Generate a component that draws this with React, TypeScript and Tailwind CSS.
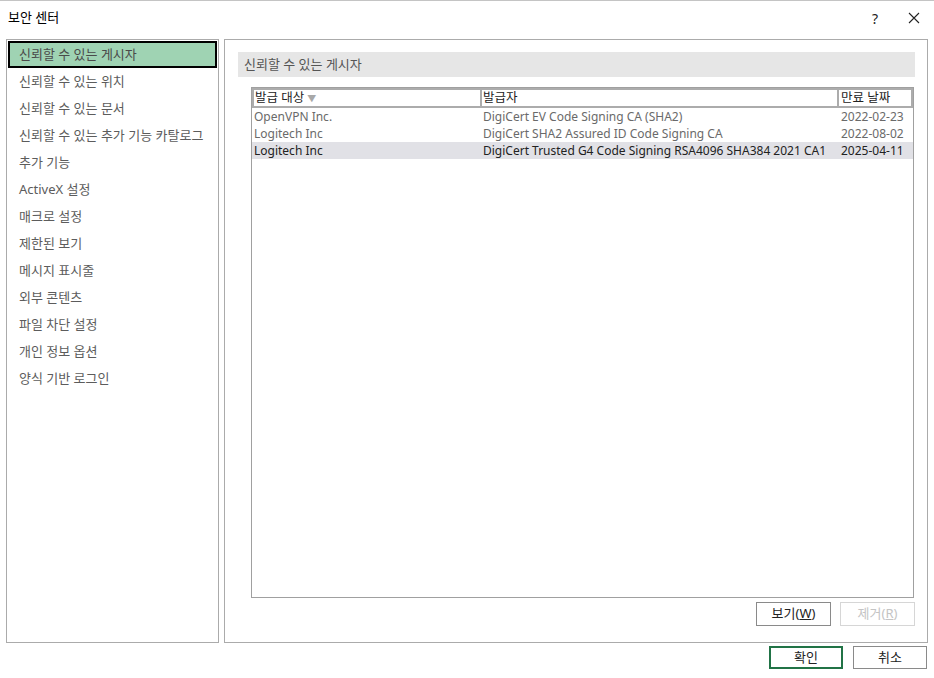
import React from 'react';

const menu = [
    '신뢰할 수 있는 게시자',
    '신뢰할 수 있는 위치',
    '신뢰할 수 있는 문서',
    '신뢰할 수 있는 추가 기능 카탈로그',
    '추가 기능',
    'ActiveX 설정',
    '매크로 설정',
    '제한된 보기',
    '메시지 표시줄',
    '외부 콘텐츠',
    '파일 차단 설정',
    '개인 정보 옵션',
    '양식 기반 로그인',
];

const rows = [
    { to: 'OpenVPN Inc.', by: 'DigiCert EV Code Signing CA (SHA2)', date: '2022-02-23' },
    { to: 'Logitech Inc', by: 'DigiCert SHA2 Assured ID Code Signing CA', date: '2022-08-02' },
    { to: 'Logitech Inc', by: 'DigiCert Trusted G4 Code Signing RSA4096 SHA384 2021 CA1', date: '2025-04-11', selected: true },
];

export default function App() {
    return (
        <div className="w-[934px] h-[678px] bg-white flex flex-col text-[13px] text-[#222] font-['Noto_Sans','Noto_Sans_CJK_KR',sans-serif] border-t border-[#c4c4c4] overflow-hidden">
            {/* title bar */}
            <div className="h-[38px] flex items-center pl-[8px] pr-[14px] pb-[4px] shrink-0">
                <span className="text-[13px] text-black">보안 센터</span>
                <div className="ml-auto flex items-center gap-[30px] text-[#222]">
                    <span className="text-[14px]">?</span>
                    <svg width="12" height="12" viewBox="0 0 12 12">
                        <path d="M1 1L11 11M11 1L1 11" stroke="#222" strokeWidth="1.1" />
                    </svg>
                </div>
            </div>

            <div className="flex gap-[5px] px-[6px] h-[604px] shrink-0">
                {/* left nav */}
                <div className="w-[213px] border border-[#ababab] p-[1px] flex flex-col">
                    {menu.map((m, i) => (
                        <div
                            key={m}
                            className={
                                i === 0
                                    ? 'h-[27px] flex items-center pl-[9px] bg-[#9fd3b3] border-2 border-black text-[#4a4a4a]'
                                    : 'h-[27px] flex items-center pl-[11px] text-[#5c5c5c]'
                            }
                        >
                            {m}
                        </div>
                    ))}
                </div>

                {/* right pane */}
                <div className="flex-1 border border-[#ababab] pt-[12px] pl-[13px] pr-[12px] flex flex-col">
                    <div className="h-[25px] bg-[#e6e6e6] flex items-center pl-[6px] text-[#555]">
                        신뢰할 수 있는 게시자
                    </div>

                    <div className="ml-[13px] mt-[10px] mr-[1px] h-[511px] border border-[#a0a0a0] flex flex-col text-[12px]">
                        <div className="flex gap-[2px] bg-[#acacac] p-[2px] h-[20px] text-[12.5px]">
                            <div className="w-[226px] bg-white flex items-center pl-[1px] leading-none text-[#222]">
                                발급 대상<span className="ml-[3px] text-[9px] text-[#a8a8a8]">▼</span>
                            </div>
                            <div className="w-[355px] bg-white flex items-center pl-[1px] leading-none text-[#222]">발급자</div>
                            <div className="flex-1 bg-white flex items-center pl-[2px] leading-none text-[#222]">만료 날짜</div>
                        </div>
                        {rows.map((r, i) => (
                            <div
                                key={i}
                                className={
                                    r.selected
                                        ? 'flex h-[17px] items-center bg-[#e1e1e6] text-[#222]'
                                        : 'flex h-[17px] items-center text-[#6a6a6a]'
                                }
                            >
                                <div className="w-[231px] pl-[2px] whitespace-nowrap">{r.to}</div>
                                <div className="w-[357px] whitespace-nowrap overflow-hidden">{r.by}</div>
                                <div className="flex-1 pl-[1px] whitespace-nowrap">{r.date}</div>
                            </div>
                        ))}
                    </div>

                    <div className="flex justify-end gap-[9px] mt-[4px]">
                        <button className="w-[75px] h-[24px] border border-[#8a8a8a] bg-white text-[#222] text-[13px]">
                            보기(<span className="underline">W</span>)
                        </button>
                        <button className="w-[75px] h-[24px] border border-[#d6d6d6] bg-white text-[#c4c4c4] text-[13px]">
                            제거(<span className="underline">R</span>)
                        </button>
                    </div>
                </div>
            </div>

            {/* footer */}
            <div className="flex justify-end gap-[10px] pr-[7px] mt-[3px]">
                <button className="w-[74px] h-[23px] border-2 border-[#217346] bg-white text-[13px] text-[#222]">확인</button>
                <button className="w-[74px] h-[23px] border border-[#8a8a8a] bg-white text-[13px] text-[#222]">취소</button>
            </div>
        </div>
    );
}
